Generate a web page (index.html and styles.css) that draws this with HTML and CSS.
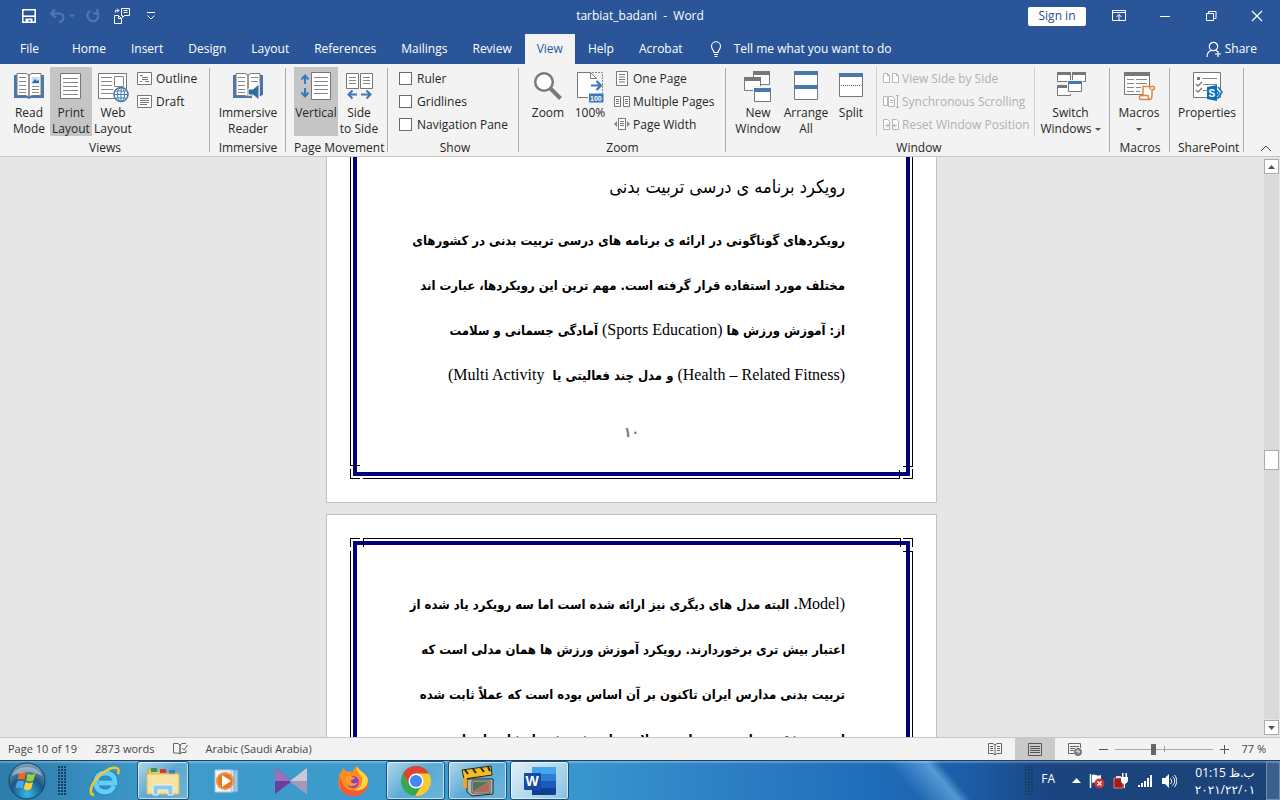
FILE: index.html
```html
<!DOCTYPE html>
<html lang="en">
<head>
<meta charset="utf-8">
<title>tarbiat_badani - Word</title>
<link rel="stylesheet" href="styles.css">
</head>
<body>
<header class="titlebar">
  <div class="quick">
    <button class="tbtn" aria-label="Save"><svg width="16" height="16" viewBox="0 0 16 16" fill="none" stroke="#fff" stroke-width="1.6"><path d="M1.800 1.800h12.400v12.400H1.800z"/><path d="M2 8.200h12"/><path d="M4.500 10.500h7V14h-2v-2h-2v2h-3z" fill="#fff" stroke="none"/></svg></button>
    <button class="tbtn undo" aria-label="Undo"><svg width="28" height="16" viewBox="0 0 28 16" fill="none" stroke="#4f78b8" stroke-width="2"><path d="M6 1.500 2 5.500l4.500 4M2.500 5.500H10c6 0 6 8 0 8.500"/><path d="M20 6.500h6l-3 3z" fill="#4f78b8" stroke="none"/></svg></button>
    <button class="tbtn" aria-label="Repeat"><svg width="16" height="16" viewBox="0 0 16 16" fill="none" stroke="#4f78b8" stroke-width="2"><path d="M5 3a5.500 5.500 0 1 0 6.500.5M8 5.500h4.500V1"/></svg></button>
    <button class="tbtn" aria-label="Paste and switch"><svg width="18" height="18" viewBox="0 0 18 18" fill="none" stroke="#fff"><path d="M8.500 1.500h8v7h-5l-2 2v-2h-1z"/><path d="M10.500 3.500h4M10.500 5.500h4M2.500 5.500v-2h3M4 1.500l2 2-2 2"/><path d="M1.500 8.500h4l3 3v5h-7zM5.500 8.500v3h3"/></svg></button>
    <button class="tbtn more" aria-label="Customize Quick Access Toolbar"><svg width="10" height="10" viewBox="0 0 10 10" fill="none" stroke="#fff"><path d="M1 1.500h8M1.500 4.500 5 8l3.500-3.500"/></svg></button>
  </div>
  <h1 class="doc-title">tarbiat_badani&nbsp; -&nbsp; Word</h1>
  <div class="window-tools">
    <button class="signin">Sign in</button>
    <button class="wbtn" aria-label="Ribbon Display Options"><svg width="14" height="12" viewBox="0 0 14 12" fill="none" stroke="#fff"><path d="M.5.5h13v10H.5zM.5 2.500h13M7 10V4.500M4.500 7 7 4.500 9.500 7"/></svg></button>
    <button class="wbtn" aria-label="Minimize"><svg width="10" height="12" viewBox="0 0 10 12" stroke="#fff"><path d="M0 6.500h10"/></svg></button>
    <button class="wbtn" aria-label="Restore Down"><svg width="11" height="12" viewBox="0 0 11 12" fill="none" stroke="#fff"><path d="M.5 3.500h7v7h-7zM2.500 3V1.500h7.500v7H8"/></svg></button>
    <button class="wbtn" aria-label="Close"><svg width="12" height="12" viewBox="0 0 12 12" stroke="#fff" stroke-width="1.200"><path d="m1 1 10 10M11 1 1 11"/></svg></button>
  </div>
</header>
<nav class="tabs" aria-label="Ribbon tabs">
  <button class="tab file">File</button>
  <button class="tab">Home</button>
  <button class="tab">Insert</button>
  <button class="tab">Design</button>
  <button class="tab">Layout</button>
  <button class="tab">References</button>
  <button class="tab">Mailings</button>
  <button class="tab">Review</button>
  <button class="tab active">View</button>
  <button class="tab">Help</button>
  <button class="tab">Acrobat</button>
  <button class="tell"><svg width="12" height="17" viewBox="0 0 12 17" fill="none" stroke="#fff" stroke-width="1.100"><path d="M4 11.500C4 9 1.500 8.500 1.500 5.300a4.500 4.500 0 0 1 9 0C10.500 8.500 8 9 8 11.500zM4 13.500h4M4.500 15.500h3"/></svg>Tell me what you want to do</button>
  <button class="share"><svg width="16" height="17" viewBox="0 0 16 17" fill="none" stroke="#fff" stroke-width="1.200"><circle cx="7.500" cy="5.500" r="4.200"/><path d="M1 16c0-4 2-6 4.500-6.500M10 9.500l1.500 1M12 10v6M9 13h6"/></svg>Share</button>
</nav>
<section class="ribbon" aria-label="View">
  <div class="group views">
    <div class="items">
      <button class="big"><svg width="32" height="32" viewBox="0 0 32 32"><path d="M1 4h30v23H18l-2 1-2-1H1z" fill="#4878ad"/><path d="M4 2.500h9l3 1.500v22l-3-1.500H4zM28 2.500h-9L16 4v22l3-1.500h9z" fill="#fff" stroke="#777"/><path d="M6 6.500h7M6 10.500h7M6 14.500h7M6 18.500h7M6 21.500h7M19 15.500h7M19 18.500h7M19 21.500h7" stroke="#888"/><path d="M18.500 6h8v7h-8z" fill="#c8dff0"/><path d="m19 12 3-4 2 2 2-1v3z" fill="#2f6da6"/></svg><span>Read<br>Mode</span></button>
      <button class="big on"><svg width="32" height="32" viewBox="0 0 32 32"><path d="M5.500 2.500h20v25h-20z" fill="#fff" stroke="#777"/><path d="M8 7.500h15M8 11.500h15M8 15.500h15M8 19.500h15M8 23.500h15" stroke="#888"/></svg><span>Print<br>Layout</span></button>
      <button class="big"><svg width="32" height="32" viewBox="0 0 32 32"><path d="M1.500 2.500h28v25h-28z" fill="#fff" stroke="#777"/><path d="M4 6.500h11M4 10.500h11M4 14.500h11M4 18.500h12M4 22.500h12M17.500 5.500h9v10h-9z" stroke="#888" fill="none"/><circle cx="24" cy="23.500" r="7" fill="#fff" stroke="#4878ad" stroke-width="1.500"/><path d="M17 23.500h14M24 16.500v14M18.500 20h11M18.500 27h11" stroke="#4878ad"/><ellipse cx="24" cy="23.500" rx="3.500" ry="7" fill="none" stroke="#4878ad"/></svg><span>Web<br>Layout</span></button>
      <div class="stack">
        <button class="small"><svg width="16" height="16" viewBox="0 0 16 16" fill="#fff" stroke="#777"><path d="M.5 1.500h14v12H.5z"/><path d="M3 4.500h3M5 6.500h6M5 8.500h6M8 10.500h4M3 10.500h2"/></svg>Outline</button>
        <button class="small"><svg width="16" height="16" viewBox="0 0 16 16" fill="#fff" stroke="#777"><path d="M.5 1.500h14v12H.5z"/><path d="M3 4.500h9M3 6.500h9M3 8.500h9M3 10.500h7"/></svg>Draft</button>
      </div>
    </div>
    <div class="label">Views</div>
  </div>
  <div class="group immersive">
    <div class="items">
      <button class="big wide"><svg width="32" height="32" viewBox="0 0 32 32"><path d="M1 4h30v23H1z" fill="#4878ad"/><path d="M20 24h12v8H20z" fill="#f3f3f3"/><path d="M4 2.500h9l3 1.500v22l-3-1.500H4zM28 2.500h-9L16 4v22l3-1.500h9z" fill="#fff" stroke="#777"/><path d="M6 6.500h7M6 10.500h7M6 14.500h7M6 18.500h7M6 21.500h7M19 6.500h7M19 10.500h7" stroke="#888"/><path d="M16 18h5l6-5v16l-6-5h-5z" fill="#326ca6" stroke="#fff"/><path d="M28.500 17c2 3 2 5 0 8" fill="none" stroke="#326ca6" stroke-width="1.500"/></svg><span>Immersive<br>Reader</span></button>
    </div>
    <div class="label">Immersive</div>
  </div>
  <div class="group movement">
    <div class="items">
      <button class="big on mid"><svg width="32" height="32" viewBox="0 0 32 32"><path d="M11.500 1.500h19v27h-19z" fill="#fff" stroke="#777"/><path d="M14 6.500h14M14 10.500h14M14 14.500h14M14 18.500h14M14 22.500h14" stroke="#888"/><path d="M5 13V5M1.500 8.500 5 4.500l3.500 4M5 17v9M1.500 21.500 5 25.500l3.500-4" fill="none" stroke="#3b78b5" stroke-width="2"/></svg><span>Vertical</span></button>
      <button class="big"><svg width="32" height="32" viewBox="0 0 32 32"><path d="M3.500 2.500h12v15h-12zM17.500 2.500h12v15h-12z" fill="#fff" stroke="#777"/><path d="M6 6.500h7M6 9.500h7M6 12.500h7M20 6.500h7M20 9.500h7M20 12.500h7" stroke="#888"/><path d="M14 23.500H6M9.500 19.500l-4 4 4 4M18 23.500h9M23.500 19.500l4 4-4 4" fill="none" stroke="#3b78b5" stroke-width="2"/></svg><span>Side<br>to Side</span></button>
    </div>
    <div class="label">Page Movement</div>
  </div>
  <div class="group show">
    <div class="items stack">
      <label class="check"><input type="checkbox">Ruler</label>
      <label class="check"><input type="checkbox">Gridlines</label>
      <label class="check"><input type="checkbox">Navigation Pane</label>
    </div>
    <div class="label">Show</div>
  </div>
  <div class="group zoomgroup">
    <div class="items">
      <button class="big"><svg width="32" height="32" viewBox="0 0 32 32" fill="none" stroke="#7a7a7a"><circle cx="12" cy="11" r="8.800" fill="#fff" stroke-width="2.500"/><path d="m18.500 17.500 10 10" stroke-width="4"/></svg><span>Zoom</span></button>
      <button class="big"><svg width="32" height="32" viewBox="0 0 32 32" fill="none"><path d="M3.500 1.500h13l6 6v19h-19z" fill="#fff"/><path d="M22.500 8V7.500l-6-6h-13v25H14" stroke="#777"/><path d="M16.500 1.500v6h6" stroke="#777"/><path d="M18 1.500h10.500V22" stroke="#888" stroke-dasharray="2 1"/><path d="M17 14.500h9M22.500 10l4.500 4.500-4.500 4.500" stroke="#3b78b5" stroke-width="2.200"/><path d="M15 22.500h14.500v9H15z" fill="#3b78b5"/><text x="16" y="30" font-family="Liberation Sans" font-size="7" font-weight="bold" fill="#fff">100</text></svg><span>100%</span></button>
      <div class="stack">
        <button class="small"><svg width="16" height="16" viewBox="0 0 16 16" fill="#fff" stroke="#777"><path d="M2.500.5h11v14h-11z"/><path d="M5 3.500h6M5 6h6M5 8.500h6M5 11h6"/></svg>One Page</button>
        <button class="small"><svg width="16" height="16" viewBox="0 0 16 16" fill="#fff" stroke="#777"><path d="M.5 2.500h6v10h-6zM9.500 2.500h6v10h-6z"/><path d="M2 5.500h3M2 7.500h3M2 9.500h3M11 5.500h3M11 7.500h3M11 9.500h3"/></svg>Multiple Pages</button>
        <button class="small"><svg width="16" height="16" viewBox="0 0 16 16" fill="#fff" stroke="#777"><path d="M4.500 1.500h7v11h-7z"/><path d="M6 4.500h4M6 6.500h4M6 8.500h4"/><path d="M3 4 0 7l3 3zM13 4l3 3-3 3z" fill="#6a87b0" stroke="none"/></svg>Page Width</button>
      </div>
    </div>
    <div class="label">Zoom</div>
  </div>
  <div class="group window">
    <div class="items">
      <button class="big mid"><svg width="32" height="32" viewBox="0 0 32 32"><path d="M11.500.5h16v13h-16z" fill="#fff" stroke="#777"/><path d="M11 0h17v4H11z" fill="#777"/><path d="M2.500 6.500h16v13h-16z" fill="#fff" stroke="#777"/><path d="M2 6h17v4H2z" fill="#777"/><path d="M11 15h19v16H11z" fill="#f3f3f3"/><path d="M12.500 17.500h16v13h-16z" fill="#fff" stroke="#777"/><path d="M12 17h17v4H12z" fill="#4878ad"/></svg><span>New<br>Window</span></button>
      <button class="big arrange"><svg width="32" height="32" viewBox="0 0 32 32"><path d="M4.500.5h23v28h-23z" fill="#fff" stroke="#777"/><path d="M4 0h24v4H4zM4 14h24v4H4z" fill="#4878ad"/></svg><span>Arrange<br>All</span></button>
      <button class="big split"><svg width="32" height="32" viewBox="0 0 32 32"><path d="M4.500 2.500h23v23h-23z" fill="#fff" stroke="#777"/><path d="M4 2h24v4H4z" fill="#4878ad"/><path d="M6 14.500h20" stroke="#555" stroke-dasharray="1 1"/></svg><span>Split</span></button>
      <div class="stack fenced">
        <button class="small" disabled><svg width="16" height="16" viewBox="0 0 16 16" fill="#fff" stroke="#b5b5b5"><path d="M.5 2.500h4l2 2v7h-6zM9.500 2.500h4l2 2v7h-6zM4.500 2.500v2h2M13.500 2.500v2h2"/></svg>View Side by Side</button>
        <button class="small" disabled><svg width="16" height="16" viewBox="0 0 16 16" fill="#fff" stroke="#b5b5b5"><path d="M.5 2.500h4v9h-4zM5.500 2.500h4l2 2v8h-6zM7 6.500h3M7 8.500h3M13 1.500h3M14.500 1.500v12M13 13.500h3"/></svg>Synchronous Scrolling</button>
        <button class="small" disabled><svg width="16" height="16" viewBox="0 0 16 16" fill="#fff" stroke="#b5b5b5"><path d="M.5 2.500h4l2 2v8h-6zM9.500 2.500h4l2 2v8h-6zM2 8.500h4M4 6.500l2 2-2 2M14 8.500h-4M12 6.500l-2 2 2 2"/></svg>Reset Window Position</button>
      </div>
      <button class="big switch"><svg width="32" height="32" viewBox="0 0 32 32"><path d="M2.500 1.500h13v9h-13zM17.500 1.500h13v9h-13zM2.500 14.500h13v10h-13z" fill="#fff" stroke="#777"/><path d="M2 1h14v3H2zM17 1h14v3H17zM2 14h14v3H2z" fill="#777"/><path d="M12 9h16v14H12z" fill="#f3f3f3"/><path d="M13.500 10.500h13v10h-13z" fill="#fff" stroke="#777"/><path d="M13 10h14v3H13z" fill="#4878ad"/></svg><span>Switch<br>Windows <i class="caret"></i></span></button>
    </div>
    <div class="label">Window</div>
  </div>
  <div class="group macros">
    <div class="items">
      <button class="big"><svg width="32" height="32" viewBox="0 0 32 32"><path d="M1.500 1.500h25v22h-25z" fill="#fff" stroke="#777"/><path d="M1 1h26v4H1z" fill="#777"/><path d="M4 8.500h7M13 8.500h11M4 12.500h7M13 12.500h11M4 16.500h7M13 16.500h5M4 20.500h7M13 20.500h4" stroke="#888"/><path d="M20 15.500h10c2 0 2 3 0 3h-1v6c0 4-2 4-3 4h-8c-2 0-2-4 0-4h2z" fill="#fff" stroke="#e0823d" stroke-width="1.500"/><path d="M18 24.500h7c0 2 0 4 2 4M27 15.500v3" stroke="#e0823d" fill="none" stroke-width="1.500"/></svg><span>Macros<br><i class="caret"></i></span></button>
    </div>
    <div class="label">Macros</div>
  </div>
  <div class="group sharepoint">
    <div class="items">
      <button class="big wide"><svg width="32" height="32" viewBox="0 0 32 32" fill="none"><path d="M2.500 1.500h27v25h-27z" fill="#fff" stroke="#777"/><path d="M11 7.500h15M12 13.500h14M12 19.500h5" stroke="#888"/><path d="M6 6h3v3H6z" fill="#777"/><path d="m5 13 2 2 4-4M5 19l2 2 4-4" stroke="#777" stroke-width="1.300"/><path d="m23 16 5 6-5 6M27 16l4 5-4 6h-5" stroke="#1879c0" stroke-width="1.700" fill="#fff"/><path d="m16 16 10-2v16l-10-2z" fill="#0b6cb8"/><text x="17.500" y="26" font-family="Liberation Sans" font-size="10" font-weight="bold" fill="#fff">S</text></svg><span>Properties</span></button>
    </div>
    <div class="label">SharePoint</div>
  </div>
  <button class="collapse" aria-label="Collapse the Ribbon"><svg width="12" height="7" viewBox="0 0 12 7" fill="none" stroke="#444"><path d="m1 6 5-5 5 5"/></svg></button>
</section>
<main class="workspace">
  <div class="canvas" lang="fa" dir="rtl">
    <article class="page first">
      <div class="frame">
        <svg class="corner bl" width="14" height="14" viewBox="0 0 14 14"><path d="M0 1h1v3H0zM10 13h3v1h-3z" fill="#fff"/><path d="M0 .5h10" stroke="#000"/></svg>
        <svg class="corner br" width="14" height="14" viewBox="0 0 14 14"><path d="M13 2h1v2h-1zM1 13h3v1H1z" fill="#fff"/><path d="M4 1.500h10M.5 5v9" stroke="#000"/></svg>
        <div class="text">
          <h2>رویکرد برنامه ی درسی تربیت بدنی</h2>
          <p>رویکردهای گوناگونی در ارائه ی برنامه های درسی تربیت بدنی در کشورهای<br>مختلف مورد استفاده قرار گرفته است. مهم ترین این رویکردها، عبارت اند<br>از: آموزش ورزش ها <span class="latin">(Sports Education)</span> آمادگی جسمانی و سلامت<br><span class="latin">(Health – Related Fitness)</span> و مدل چند فعالیتی یا&nbsp; <span class="latin">Multi Activity)</span></p>
          <footer class="folio">۱۰</footer>
        </div>
      </div>
    </article>
    <article class="page second">
      <div class="frame">
        <svg class="corner tl" width="14" height="14" viewBox="0 0 14 14"><path d="M10 0h3v1h-3zM0 9h1v4H0z" fill="#fff"/><path d="M13.500 0v9" stroke="#000"/></svg>
        <svg class="corner tr" width="14" height="14" viewBox="0 0 14 14"><path d="M2 0h2v1H2zM13 9h1v4h-1z" fill="#fff"/><path d="M1.500 0v9M4 13.500h10" stroke="#000"/></svg>
        <div class="text">
          <p><span class="latin">(Model</span>. البته مدل های دیگری نیز ارائه شده است اما سه رویکرد یاد شده از<br>اعتبار بیش تری برخوردارند. رویکرد آموزش ورزش ها همان مدلی است که<br>تربیت بدنی مدارس ایران تاکنون بر آن اساس بوده است که عملاً ثابت شده<br>است موفقیت هایی پدید نیاورده علاوه نتایج پژوهش ها نشان داده است</p>
        </div>
      </div>
    </article>
  </div>
  <div class="scrollbar">
    <button aria-label="Scroll up"><svg width="7" height="4" viewBox="0 0 7 4"><path d="M3.500 0 7 4H0z" fill="#555"/></svg></button>
    <div class="rail"><div class="thumb"></div></div>
    <button aria-label="Scroll down"><svg width="7" height="4" viewBox="0 0 7 4"><path d="M0 0h7L3.500 4z" fill="#555"/></svg></button>
  </div>
</main>
<footer class="status">
  <span>Page 10 of 19</span>
  <span>2873 words</span>
  <button class="sbtn" aria-label="Proofing"><svg width="15" height="14" viewBox="0 0 15 14" fill="none" stroke="#666"><path d="M7 12V3L5 1.500H.5V11H5zV3l2-1.500h4M7 12l2-1.500h4V8M9 6l2 2 3.500-5"/></svg></button>
  <span>Arabic (Saudi Arabia)</span>
  <div class="viewmodes">
    <button aria-label="Read Mode"><svg width="14" height="13" viewBox="0 0 14 13" fill="none" stroke="#666"><path d="M7 12V2L5 .5H.5v10H5L7 12l2-1.500h4.500V.5H9L7 2M2 3.500h3M2 5.500h3M2 7.500h3M9 3.500h3M9 5.500h3M9 7.500h3"/></svg></button>
    <button class="on" aria-label="Print Layout"><svg width="14" height="13" viewBox="0 0 14 13" fill="none" stroke="#555"><path d="M.5.5h13v12H.5zM2 3.500h10M2 5.500h10M2 7.500h10M2 9.500h10"/></svg></button>
    <button aria-label="Web Layout"><svg width="14" height="13" viewBox="0 0 14 13" fill="none" stroke="#666"><path d="M6 10.500H.500V.500h12V5M2 3.500h9M2 5.500h5M2 7.500h4"/><circle cx="10" cy="9" r="3.500" fill="#888"/><path d="M8 8h3v2" stroke="#fff"/></svg></button>
  </div>
  <div class="zoombar">
    <button aria-label="Zoom out"><svg width="9" height="9" viewBox="0 0 9 9" stroke="#555"><path d="M0 4.500h9"/></svg></button>
    <input type="range" min="0" max="100" value="38" aria-label="Zoom">
    <button aria-label="Zoom in"><svg width="9" height="9" viewBox="0 0 9 9" stroke="#555"><path d="M0 4.500h9M4.500 0v9"/></svg></button>
    <output>77 %</output>
  </div>
</footer>
<footer class="taskbar">
  <button class="start" aria-label="Start"><svg width="38" height="38" viewBox="0 0 38 38"><defs><radialGradient id="orb" cx=".5" cy=".85" r=".9"><stop offset="0" stop-color="#36b8e8"/><stop offset=".5" stop-color="#1c5785"/><stop offset="1" stop-color="#8fb0c4"/></radialGradient></defs><circle cx="19" cy="19" r="18" fill="url(#orb)" stroke="#16405f"/><path d="M11 11c3-2 5-1.500 7 0l-1.500 7c-2-1.500-4-1.500-7 0z" fill="#ee6a2c"/><path d="M19.500 11.500c2.500 1.500 5 1.500 8 0l-2 7c-2.500 1.500-5 1.500-7.500 0z" fill="#9bcf3c"/><path d="M9 19.500c3-1.500 5-1.500 7 0l-1.500 7c-2-1.500-4-1.500-7 0z" fill="#4aa3e6"/><path d="M17.500 20c2.500 1.500 5 1.500 7.500 0l-1.800 7c-2.700 1.500-5 1.500-7.500 0z" fill="#fdd03a"/><path d="M4 14C8 2 30 2 34 14 24 9 14 9 4 14z" fill="#fff" opacity=".35"/></svg></button>
  <i class="grip"></i>
  <button class="task ie" aria-label="Internet Explorer"><svg width="32" height="32" viewBox="0 0 32 32" fill="none"><path d="M25 21c-2 4-4 6-9 6-6 0-9-4-9-9.500S10 8 16.500 8 26 12.500 26 18H10" stroke="#1c84c8" stroke-width="7"/><path d="M25 21c-2 4-4 6-9 6-6 0-9-4-9-9.500S10 8 16.500 8 26 12.500 26 18H10" stroke="#65cdf6" stroke-width="5"/><path d="M5 30C-3 29 5 13 15 7 24 1 32 1 29 9" stroke="#f2c62e" stroke-width="2.500"/></svg></button>
  <button class="task open explorer" aria-label="File Explorer"><svg width="34" height="32" viewBox="0 0 34 32"><path d="M2 4h8l1 2h8l1 2h12v21H2z" fill="#e9c767" stroke="#c9a23e"/><path d="M5 3h6v4H5z" fill="#2e9c50"/><path d="M14 4h6v4h-6z" fill="#cf3b33"/><path d="M23 5h6v5h-6z" fill="#3b7bd0"/><path d="M1 9h32v20H1z" fill="#f7e3a0" stroke="#d9b95d"/><path d="M7 30V20h20v10h-5v-5H12v5z" fill="#8fcbe8" stroke="#e5f6fd"/></svg></button>
  <button class="task player" aria-label="Media Player"><svg width="30" height="28" viewBox="0 0 30 28"><path d="M10 3h16v22H10z" fill="#9bc9e8" stroke="#5f9cc8"/><path d="M6 3h16v22H6z" fill="#cfe6f5" stroke="#78add2"/><path d="M3 3h16v22H3z" fill="#eef6fb" stroke="#a5c9e0"/><circle cx="13" cy="14" r="9" fill="#ee7420"/><circle cx="13" cy="14" r="8" fill="none" stroke="#f9ae63"/><path d="m10 8 9 6-9 6z" fill="#fff"/></svg></button>
  <button class="task km" aria-label="KMPlayer"><svg width="34" height="30" viewBox="0 0 34 30"><path d="M1 1v27l17-13z" fill="#6a3f98"/><path d="M1 1v14h17z" fill="#9673bb"/><path d="M33 2v26L16 15z" fill="#cbc6d8"/><path d="M33 15v13L16 15z" fill="#a39ab9"/></svg></button>
  <button class="task fox" aria-label="Firefox"><svg width="32" height="32" viewBox="0 0 32 32"><path d="M4 7c1-1 2-2 2-4l4 4c3-1 5 0 6 0 0-3 2-5 4-6 0 5 10 7 11 15 1 9-6 15-15 15S-1 23 2 13c0-2 1-5 2-6z" fill="#ff8b20"/><path d="M20 1c-3 6 5 6 4 13 4 8-5 14-12 11-5-2-7-7-9-13-3 11 4 19 13 19S32 25 31 15C30 8 22 7 20 1z" fill="#fa5536"/><path d="M20 1c-3 6 6 8 5 15 0 6-4 8-8 9 7 2 13-2 14-9C31 8 22 7 20 1z" fill="#ffd340"/><circle cx="16" cy="17" r="6" fill="#8a3fc2"/><path d="M9 12c4-3 7 0 9 1-1 2-4 1-4 3 0 3 5 3 7 1-1 5-10 6-12 0z" fill="#ff9b28"/></svg></button>
  <button class="task open" aria-label="Chrome"><svg width="32" height="32" viewBox="0 0 32 32"><circle cx="16" cy="16" r="15" fill="#35a852"/><path d="M3 8.500A15 15 0 0 1 29 8.500H16l-6.500 11z" fill="#e24232"/><path d="M29 8.500A15 15 0 0 1 15 31l7.500-12L16 8.500z" fill="#fbc934"/><circle cx="16" cy="16" r="7.500" fill="#fff"/><circle cx="16" cy="16" r="6" fill="#4285f4"/></svg></button>
  <button class="task open" aria-label="Media Player Classic"><svg width="34" height="32" viewBox="0 0 34 32"><path d="m1 5 29-4 1 9-28 4z" fill="#f4bd24" stroke="#222"/><path d="m4 5 3 4M12 4l3 4M20 3l3 4M27 2l2 4" stroke="#2a2213" stroke-width="2"/><path d="M6 14h26v15l-21 2-5-4z" fill="#b9b4aa" stroke="#222"/><path d="M11 16h18v12H11z" fill="#deddd7" stroke="#444"/><path d="M12 17h16L12 27z" fill="#4f7653"/><path d="m28 17-16 10h16z" fill="#b5665d"/><path d="M2 13h4v10H2z" fill="#e8a71e"/></svg></button>
  <button class="task open current" aria-label="Word"><svg width="34" height="32" viewBox="0 0 34 32"><rect x="9" y="2" width="24" height="28" rx="2" fill="#185abd"/><path d="M9 2h22a2 2 0 0 1 2 2v5H9z" fill="#41a5ee"/><path d="M9 9h24v7H9z" fill="#2b7cd3"/><path d="M9 23h24v5a2 2 0 0 1-2 2H9z" fill="#103f91"/><rect x="1" y="8" width="17" height="17" rx="1" fill="#174aa5"/><text x="2.500" y="21" font-family="Liberation Sans" font-size="14" font-weight="bold" fill="#fff">W</text></svg></button>
  <div class="tray">
    <i class="grip"></i>
    <span class="lang">FA</span>
    <button aria-label="Show hidden icons"><svg width="9" height="5" viewBox="0 0 9 5"><path d="m4.500 0 4.500 5H0z" fill="#fff"/></svg></button>
    <button aria-label="Action Center"><svg width="16" height="16" viewBox="0 0 16 16"><path d="M1.500 1v14" stroke="#fff" stroke-width="1.500"/><path d="M3 2c3-2 5 2 9 0v8c-4 2-6-2-9 0z" fill="#fff"/><circle cx="10.500" cy="10.500" r="5" fill="#d92e2b"/><path d="m8.500 8.500 4 4M12.500 8.500l-4 4" stroke="#fff" stroke-width="1.500"/></svg></button>
    <button aria-label="Power"><svg width="16" height="16" viewBox="0 0 16 16"><path d="M1 5h9v10H1z" fill="#a31b17" stroke="#f07a6b"/><path d="M3 3h5v2H3z" fill="#ddd"/><path d="M8 4h7v3c0 3-2 3-3 4v4h-1v-4C9 10 8 10 8 7zM9 0h1.500v4H9zM12.500 0H14v4h-1.500z" fill="#fff"/></svg></button>
    <button aria-label="Network"><svg width="16" height="16" viewBox="0 0 16 16" fill="#fff"><path d="M1 12h2v2H1zM4 10h2v4H4zM7 8h2v6H7zM10 5h2v9h-2zM13 2h2v12h-2z"/></svg></button>
    <button aria-label="Volume"><svg width="16" height="16" viewBox="0 0 16 16" fill="none" stroke="#fff"><path d="M1 5h3l4-4v14l-4-4H1z" fill="#fff" stroke="none"/><path d="M9.500 5.500c1.500 2 1.500 3.500 0 5.500M11.500 3.500c3 3 3 6 0 9M13.500 2c3 4 3 8 0 12"/></svg></button>
    <time class="clock" dir="rtl" lang="fa"><span>ب.ظ 01:15</span><span dir="ltr">۲۰۲۱/۲۲/۰۱</span></time>
    <button class="peek" aria-label="Show desktop"></button>
  </div>
</footer>
</body>
</html>
```
FILE: styles.css
```css
* { box-sizing: border-box; }
body {
  margin: 0;
  height: 100vh;
  display: flex;
  flex-direction: column;
  overflow: hidden;
  background: #e6e6e6;
  color: #262626;
  font: 12px/16px "Open Sans", "Noto Sans", sans-serif;
}
button {
  margin: 0;
  padding: 0;
  border: 0;
  background: none;
  color: inherit;
  font: inherit;
}
svg { display: block; flex: none; }

.titlebar {
  display: grid;
  grid-template-columns: 1fr auto 1fr;
  align-items: center;
  flex: none;
  height: 32px;
  background: #2a5699;
  color: #fff;
}
.quick { display: flex; align-items: center; gap: 12px; padding-left: 21px; }
.quick .undo { margin-right: -4px; }
.quick .more { margin-left: 3px; }
.doc-title { margin: 0; font: inherit; }
.window-tools { display: flex; align-items: center; justify-content: flex-end; }
.signin {
  width: 58px;
  height: 19px;
  margin-right: 10px;
  border-radius: 2px;
  background: #fff;
  color: #2a4a8c;
}
.wbtn { width: 46px; height: 32px; display: grid; place-items: center; }

.tabs {
  display: flex;
  gap: 1px;
  flex: none;
  height: 32px;
  padding-top: 2px;
  background: #2a5699;
  color: #fff;
}
.tab { padding: 0 12px; }
.tab.file { padding: 0 20px; }
.tab.active { background: #f3f3f3; color: #2a5699; }
.tell, .share { display: flex; align-items: center; }
.tell { margin-left: 14px; gap: 12px; }
.share { margin-left: auto; margin-right: 23px; gap: 3px; }

.ribbon {
  display: flex;
  flex: none;
  height: 93px;
  background: #f3f3f3;
  border-bottom: 1px solid #c6c6c6;
  white-space: nowrap;
}
.group {
  display: flex;
  flex-direction: column;
  flex: none;
  padding: 3px 8px 0;
  background: linear-gradient(#ababab, #ababab) right 4px / 1px 84px no-repeat;
}
.items { display: flex; height: 69px; }
.label { margin-top: 4px; text-align: center; }
.views { width: 210px; }
.immersive { width: 76px; }
.movement { width: 102px; }
.show { width: 131px; }
.zoomgroup { width: 207px; }
.window { width: 384px; }
.macros { width: 60px; }
.sharepoint { width: 74px; }
.big {
  display: flex;
  flex-direction: column;
  align-items: center;
  gap: 2px;
  flex: none;
  width: 42px;
  padding-top: 4px;
}
.big.mid { width: 44px; }
.big.wide { width: 58px; }
.big.on { background: #c5c5c5; }
.big.arrange { width: 52px; }
.big.split { width: 38px; }
.big.switch { width: 72px; }
.immersive .big { margin: 0 auto; }
.window { padding-left: 10px; }
.stack { display: flex; flex-direction: column; }
.small { display: flex; align-items: center; gap: 3px; height: 23px; }
.views .stack { padding-left: 3px; }
.zoomgroup .stack { padding-left: 3px; }
.fenced {
  margin-left: 6px;
  padding: 0 4px 0 6px;
  border-left: 1px solid #d0d0d0;
  border-right: 1px solid #d0d0d0;
}
.small:disabled { color: #b1b1b1; }
.check { display: flex; align-items: center; gap: 5px; height: 23px; }
.show { padding-left: 11px; }
.check input {
  appearance: none;
  width: 13px;
  height: 13px;
  margin: 0;
  border: 1px solid #6a6a6a;
  background: #fff;
}
.caret {
  display: inline-block;
  vertical-align: middle;
  border: 3px solid transparent;
  border-top-color: #555;
  border-bottom: 0;
}
.collapse { margin: auto 8px 4px auto; }

.workspace { display: flex; flex: 1; min-height: 0; }
.canvas {
  display: flex;
  flex-direction: column;
  align-items: center;
  gap: 11px;
  flex: 1;
  overflow: hidden;
}
.page {
  flex: none;
  width: 611px;
  padding: 23px;
  border: 1px solid #c3c3c3;
  background: #fff;
}
.page.first { padding-top: 0; border-top: 0; }
.frame {
  position: relative;
  border: 1px solid #000;
  padding: 2px;
}
.first .frame { border-top: 0; padding-top: 0; }
.text {
  border: 4px solid #00007f;
  padding: 8px 61px 0;
  color: #000;
  font: bold 13px/45px "DejaVu Sans Condensed", "DejaVu Sans", sans-serif;
  white-space: nowrap;
}
.first .text { border-top: 0; padding-bottom: 17px; }
.second .text { padding-top: 37px; }
.text h2 { margin: 0; font: 18px/44px "DejaVu Sans Condensed", "DejaVu Sans", sans-serif; }
.text p { margin: 9px 0 0; }
.second .text p { margin: 0; }
.latin { font: 16px/16px "Liberation Serif", serif; }
.folio { padding-top: 12px; text-align: center; color: #808080; font-size: 14px; }
.corner { position: absolute; }
.tl, .bl { left: -1px; }
.tr, .br { right: -1px; }
.tl, .tr { top: -1px; }
.bl, .br { bottom: -1px; }

.scrollbar {
  display: flex;
  flex-direction: column;
  gap: 1px;
  width: 17px;
  padding: 2px 1px;
}
.scrollbar button {
  display: grid;
  place-items: center;
  height: 15px;
  border: 1px solid #ababab;
  background: #fff;
}
.rail { flex: 1; padding-top: 275px; background: #dadada; }
.thumb { height: 20px; border: 1px solid #ababab; background: #fff; }

.status {
  display: flex;
  align-items: center;
  flex: none;
  height: 23px;
  padding-left: 8px;
  gap: 18px;
  border-top: 1px solid #c6c6c6;
  background: #f3f3f3;
  font-size: 11px;
  color: #444;
}
.viewmodes { display: flex; align-self: stretch; margin-left: auto; }
.viewmodes button { display: grid; place-items: center; width: 40px; }
.viewmodes .on { background: #cacaca; }
.zoombar { display: flex; align-items: center; gap: 7px; margin: 0 14px 0 -14px; }
.zoombar output { margin-left: 5px; }
.zoombar input {
  appearance: none;
  width: 98px;
  height: 12px;
  margin: 0;
  background:
    linear-gradient(#999, #999) center / 1px 6px no-repeat,
    linear-gradient(#aaa, #aaa) center / 100% 1px no-repeat;
}
.zoombar input::-webkit-slider-thumb {
  appearance: none;
  width: 5px;
  height: 11px;
  background: #666;
}

.taskbar {
  display: flex;
  align-items: center;
  flex: none;
  height: 40px;
  border-top: 1px solid #17406e;
  background:
    linear-gradient(rgba(255,255,255,.35), rgba(255,255,255,0) 3px),
    linear-gradient(50deg, transparent 70%, rgba(130,200,245,.55) 73%, transparent 74%),
    linear-gradient(90deg, #2d7cab, #3e9bc9 12%, #3c9cd0 42%, #2f82c6 55%, #1f6dba 68%, #1c5ca6 76%, #1b4580 82%, #1c4377);
}
.start { margin-left: 8px; }
.grip {
  width: 8px;
  height: 30px;
  background: radial-gradient(circle at 1px 1px, #173f66 1px, transparent 1px) 0 0 / 3px 3px;
}
.start + .grip { margin: 0 12px; }
.task {
  display: grid;
  place-items: center;
  width: 59px;
  height: 39px;
  margin-right: 3px;
}
.task.open {
  border: 1px solid #1d4f7c;
  border-radius: 3px;
  background: linear-gradient(135deg, rgba(255,255,255,.6), rgba(255,255,255,.15) 50%, rgba(255,255,255,.25));
  box-shadow: inset 0 0 0 1px rgba(255,255,255,.6);
}
.task.ie { width: 53px; margin-right: 6px; }
.task.explorer { width: 52px; margin-right: 12px; }
.task.player { width: 52px; margin-right: 10px; }
.task.km { width: 56px; margin-right: 5px; }
.task.fox { width: 57px; margin-right: 5px; }
.task.current { background: linear-gradient(135deg, rgba(255,255,255,.85), rgba(255,255,255,.4)); }
.tray { display: flex; align-items: center; gap: 8px; margin-left: auto; align-self: stretch; color: #fff; }
.tray .lang { margin: 0 9px 4px 0; }
.clock {
  display: flex;
  flex-direction: column;
  align-items: center;
  width: 62px;
  margin: 0 2px 0 9px;
  line-height: 17px;
  font-family: "Open Sans", "DejaVu Sans", sans-serif;
}
.peek { width: 14px; align-self: stretch; border: 1px solid #6f8fb3; background: rgba(255,255,255,.15); }
```
